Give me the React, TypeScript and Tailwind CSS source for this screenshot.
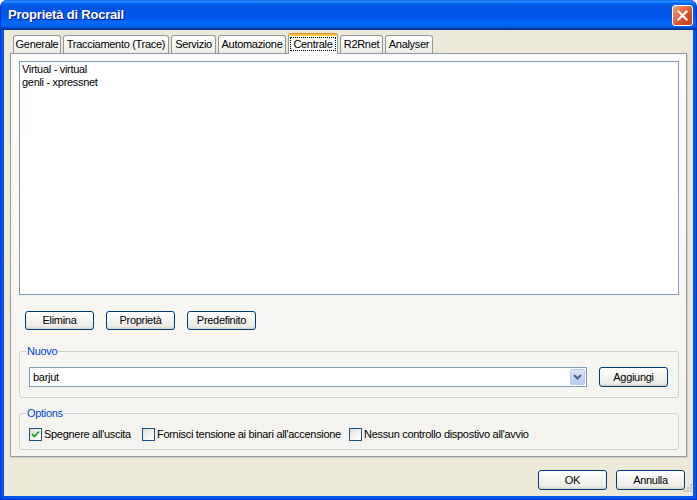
import React from 'react';

const tabs = [
  { label: 'Generale', w: 'w-[48px]' },
  { label: 'Tracciamento (Trace)', w: 'w-[106px]' },
  { label: 'Servizio', w: 'w-[45px]' },
  { label: 'Automazione', w: 'w-[68px]' },
  { label: 'Centrale', w: 'w-[50px]', active: true },
  { label: 'R2Rnet', w: 'w-[43px]' },
  { label: 'Analyser', w: 'w-[48px]' },
];

const XpButton: React.FC<{ label: string; className?: string }> = ({ label, className = '' }) => (
  <button
    className={`w-[69px] flex items-center justify-center rounded-[3px] border border-[#003c74] bg-[linear-gradient(to_bottom,#ffffff_0%,#f4f4f0_45%,#ecebe6_85%,#d6d0c5_100%)] text-[11px] tracking-[-0.3px] text-black ${className}`}
  >
    {label}
  </button>
);

const Check: React.FC<{ label: string; checked?: boolean; className?: string }> = ({ label, checked, className = '' }) => (
  <div className={`flex items-center gap-[2px] ${className}`}>
    <div className="w-[13px] h-[13px] shrink-0 border border-[#1c5180] bg-[linear-gradient(135deg,#dcdcd7_0%,#f5f5f3_60%,#ffffff_100%)] flex items-center justify-center">
      {checked && (
        <svg width="9" height="9" viewBox="0 0 9 9">
          <path d="M1 4 L3.5 6.5 L8 1.5" stroke="#21a121" strokeWidth="1.8" fill="none" />
        </svg>
      )}
    </div>
    <span className="leading-[13px] whitespace-nowrap">{label}</span>
  </div>
);

export default function App() {
  return (
    <div className="w-[697px] h-[500px] flex flex-col bg-[#0055e5] rounded-t-[7px] overflow-hidden font-['Liberation_Sans',Arial,sans-serif] text-[11px] tracking-[-0.3px] text-black border-x border-b border-[#0831d9]">
      {/* title bar */}
      <div className="h-[30px] shrink-0 flex items-center pl-[7px] pr-[3px] bg-[linear-gradient(to_bottom,#0058ee_0%,#3593ff_4%,#288eff_6%,#127dff_8%,#036ffc_10%,#0262ee_14%,#0057e5_20%,#0054e3_24%,#0055eb_56%,#005bf5_66%,#026afe_76%,#0062ef_86%,#0052d6_92%,#0040ab_94%,#003092_100%)]">
        <span className="flex-1 text-white font-bold text-[13px] tracking-[-0.2px] [text-shadow:1px_1px_0_#0a1883]">Proprietà di Rocrail</span>
        <div className="w-[21px] h-[21px] rounded-[3px] border border-white bg-[linear-gradient(135deg,#f0a286_0%,#e3734c_35%,#d0491f_70%,#c5411b_100%)] flex items-center justify-center">
          <svg width="11" height="11" viewBox="0 0 11 11">
            <path d="M1.5 1.5 L9.5 9.5 M9.5 1.5 L1.5 9.5" stroke="#fff" strokeWidth="2" strokeLinecap="square" />
          </svg>
        </div>
      </div>

      {/* client */}
      <div className="flex-1 mx-[3px] mb-[3px] bg-[#ece9d8] flex flex-col px-[6px]">
        {/* tab strip */}
        <div className="h-[23px] flex items-end gap-[2px] pl-[3px]">
          {tabs.map((t) =>
            t.active ? (
              <div
                key={t.label}
                className={`${t.w} h-[21px] -mb-[1px] relative z-10 rounded-t-[3px] border-x border-[#919b9c] bg-[#fcfcfe] flex flex-col`}
              >
                <div className="h-[1px] bg-[#e68b2c] rounded-t-[3px]" />
                <div className="h-[2px] bg-[#ffc73c]" />
                <div className="flex-1 flex items-start justify-center pt-[1px]">
                  <span className="border border-dotted border-black px-[2px] leading-[12px] whitespace-nowrap">{t.label}</span>
                </div>
              </div>
            ) : (
              <div
                key={t.label}
                className={`${t.w} h-[18px] whitespace-nowrap rounded-t-[3px] border-x border-t border-[#919b9c] bg-[linear-gradient(to_bottom,#ffffff_0%,#f7f7f4_50%,#ecebe6_100%)] flex items-center justify-center`}
              >
                {t.label}
              </div>
            )
          )}
        </div>

        {/* tab panel */}
        <div className="h-[404px] border border-[#919b9c] shadow-[1px_1px_0_#d6d2c2] bg-[linear-gradient(to_bottom,#fcfcfe,#f4f3ee)] pl-[8px] pr-[7px] pt-[7px] flex flex-col">
          <div className="h-[234px] border border-[#7f9db9] bg-white px-[2px] pt-[1px] leading-[13px]">
            <div>Virtual - virtual</div>
            <div>genli - xpressnet</div>
          </div>

          <div className="flex gap-[12px] pl-[6px] mt-[16px]">
            <XpButton label="Elimina" className="h-[19px]" />
            <XpButton label="Proprietà" className="h-[19px]" />
            <XpButton label="Predefinito" className="h-[19px]" />
          </div>

          <fieldset className="mt-[15px] border border-[#d0d0bf] rounded-[3px] pl-[9px] pr-[10px] pt-[9px] pb-[10px]">
            <legend className="-ml-[3px] px-[1px] leading-[13px] text-[#0046d5]">Nuovo</legend>
            <div className="flex items-center">
              <div className="flex-1 h-[20px] border border-[#7f9db9] bg-white flex items-center pl-[3px] pr-[1px]">
                <span className="flex-1">barjut</span>
                <div className="w-[15px] h-[16px] rounded-[2px] border border-[#b9c9ef] bg-[linear-gradient(to_bottom,#dbe6fd,#b8cbf6)] flex items-center justify-center">
                  <svg width="9" height="6" viewBox="0 0 9 6">
                    <path d="M1 1 L4.5 4.5 L8 1" stroke="#4d6185" strokeWidth="2" fill="none" />
                  </svg>
                </div>
              </div>
              <XpButton label="Aggiungi" className="h-[20px] ml-[12px]" />
            </div>
          </fieldset>

          <fieldset className="mt-[9px] border border-[#d0d0bf] rounded-[3px] pl-[9px] pr-[10px] pt-[8px] pb-[8px]">
            <legend className="-ml-[3px] px-[1px] leading-[13px] text-[#0046d5]">Options</legend>
            <div className="flex items-center">
              <Check label="Spegnere all'uscita" checked className="w-[113px]" />
              <Check label="Fornisci tensione ai binari all'accensione" className="w-[207px]" />
              <Check label="Nessun controllo dispostivo all'avvio" />
            </div>
          </fieldset>
        </div>

        {/* bottom buttons */}
        <div className="mt-[13px] flex justify-end gap-[9px] pr-[2px] relative">
          <XpButton label="OK" className="h-[20px]" />
          <XpButton label="Annulla" className="h-[20px]" />
          <svg className="absolute right-[-6px] top-[13px]" width="10" height="10" viewBox="0 0 10 10">
            <g fill="#c5c2b2">
              <rect x="7" y="1" width="2" height="2" />
              <rect x="4" y="4" width="2" height="2" />
              <rect x="7" y="4" width="2" height="2" />
              <rect x="1" y="7" width="2" height="2" />
              <rect x="4" y="7" width="2" height="2" />
              <rect x="7" y="7" width="2" height="2" />
            </g>
          </svg>
        </div>
      </div>
    </div>
  );
}
